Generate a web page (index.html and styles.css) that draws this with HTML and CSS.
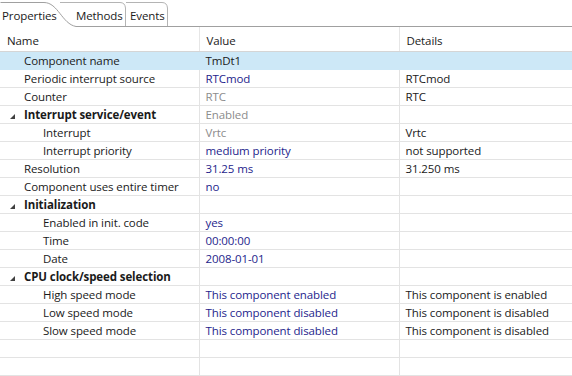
FILE: index.html
```html
<!DOCTYPE html>
<html lang="en">
<head>
  <meta charset="UTF-8">
  <title>Component Inspector</title>
  <link rel="stylesheet" href="styles.css">
</head>
<body>
  <div class="tabs">
    <svg class="tab-lines" width="572" height="27" viewBox="0 0 572 27">
      <path d="M0.5 2.5 H44 C58 2.5 62 24 76 26.5 H572" fill="none" stroke="#a0a0a0"/>
      <path d="M60 2.5 H120 Q125 2.5 125.5 8 V26" fill="none" stroke="#b4b4b4"/>
      <path d="M126 2.5 H162 Q167 2.5 167.5 8 V26" fill="none" stroke="#b4b4b4"/>
    </svg>
    <span class="tab active">Properties</span>
    <span class="tab">Methods</span>
    <span class="tab">Events</span>
  </div>

  <table class="grid">
    <colgroup>
      <col class="c-name">
      <col class="c-value">
      <col class="c-details">
    </colgroup>
    <thead>
      <tr><th>Name</th><th>Value</th><th>Details</th></tr>
    </thead>
    <tbody>
      <tr class="selected"><td class="l1">Component name</td><td>TmDt1</td><td></td></tr>
      <tr><td class="l1">Periodic interrupt source</td><td class="val">RTCmod</td><td>RTCmod</td></tr>
      <tr><td class="l1">Counter</td><td class="dim">RTC</td><td>RTC</td></tr>
      <tr class="group"><td class="l1"><span class="arrow"></span>Interrupt service/event</td><td class="dim">Enabled</td><td></td></tr>
      <tr><td class="l2">Interrupt</td><td class="dim">Vrtc</td><td>Vrtc</td></tr>
      <tr><td class="l2">Interrupt priority</td><td class="val">medium priority</td><td>not supported</td></tr>
      <tr><td class="l1">Resolution</td><td class="val">31.25 ms</td><td>31.250 ms</td></tr>
      <tr><td class="l1">Component uses entire timer</td><td class="val">no</td><td></td></tr>
      <tr class="group"><td class="l1"><span class="arrow"></span>Initialization</td><td></td><td></td></tr>
      <tr><td class="l2">Enabled in init. code</td><td class="val">yes</td><td></td></tr>
      <tr><td class="l2">Time</td><td class="val">00:00:00</td><td></td></tr>
      <tr><td class="l2">Date</td><td class="val">2008-01-01</td><td></td></tr>
      <tr class="group"><td class="l1"><span class="arrow"></span>CPU clock/speed selection</td><td></td><td></td></tr>
      <tr><td class="l2">High speed mode</td><td class="val">This component enabled</td><td>This component is enabled</td></tr>
      <tr><td class="l2">Low speed mode</td><td class="val">This component disabled</td><td>This component is disabled</td></tr>
      <tr><td class="l2">Slow speed mode</td><td class="val">This component disabled</td><td>This component is disabled</td></tr>
      <tr><td></td><td></td><td></td></tr>
      <tr><td></td><td></td><td></td></tr>
    </tbody>
  </table>
</body>
</html>
```

FILE: styles.css
```css
body {
  margin: 0;
  background-color: #fff;
  color: #1a1a1a;
  font-family: "Open Sans", "Noto Sans", sans-serif;
  font-size: 11.5px;
  letter-spacing: -0.1px;
  overflow: hidden;
}
.tabs {
  position: relative;
  height: 27px;
  display: flex;
  align-items: flex-end;
}
.tab-lines {
  position: absolute;
  left: 0;
  top: 0;
}
.tab {
  position: relative;
  box-sizing: border-box;
  height: 23px;
  line-height: 23px;
  padding-left: 2px;
}
.tab:nth-child(2) {
  width: 74px;
}
.tab:nth-child(3) {
  width: 52px;
}
.tab:nth-child(4) {
  padding-left: 4px;
}
.grid {
  border-collapse: collapse;
  table-layout: fixed;
  width: 572px;
}
.c-name { width: 199px; }
.c-value { width: 200px; }
.c-details { width: 173px; }
.grid thead tr {
  height: 24px;
}
.grid tbody tr {
  height: 18px;
}
.grid th {
  padding: 3px 0 0 7px;
  font-weight: normal;
  text-align: left;
  border-right: 1px solid #e6e6e6;
  border-bottom: 1px solid #d5d5d5;
}
.grid td {
  padding: 1px 0 0 6px;
  line-height: 16px;
  white-space: nowrap;
  overflow: hidden;
  border-right: 1px solid #e3e3e3;
  border-bottom: 1px solid #e3e3e3;
}
.grid th:last-child,
.grid td:last-child {
  border-right: none;
}
.grid td.l1 {
  padding-left: 24px;
  position: relative;
}
.grid td.l2 {
  padding-left: 43px;
}
.selected td {
  background-color: #cde8f7;
  border-top: 1px solid #8ec8ec;
  border-right-color: #cde8f7;
  border-bottom-color: #cde8f7;
}
.group td.l1 {
  font-weight: bold;
}
.arrow {
  position: absolute;
  left: 10px;
  top: 8px;
  width: 0;
  height: 0;
  border-left: 5px solid transparent;
  border-bottom: 5px solid #404040;
}
.val {
  color: #1e1e8c;
}
.dim {
  color: #8c8c8c;
}
```
